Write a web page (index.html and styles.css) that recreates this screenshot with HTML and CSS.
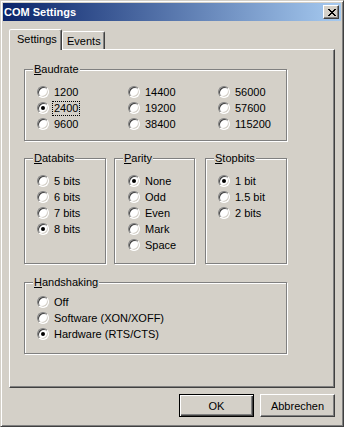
FILE: index.html
```html
<!DOCTYPE html>
<html lang="de">
<head>
  <meta charset="UTF-8">
  <title>COM Settings</title>
  <link rel="stylesheet" href="styles.css">
</head>
<body>
  <div class="window">
    <div class="titlebar">
      <span class="title">COM Settings</span>
      <button class="close">
        <svg width="8" height="7" viewBox="0 0 8 7">
          <path d="M0 0h2v1h-2zM6 0h2v1h-2zM1 1h2v1h-2zM5 1h2v1h-2zM2 2h4v1h-4zM3 3h2v1h-2zM2 4h4v1h-4zM1 5h2v1h-2zM5 5h2v1h-2zM0 6h2v1h-2zM6 6h2v1h-2z" fill="#000"/>
        </svg>
      </button>
    </div>

    <div class="client">
      <div class="tabs">
        <div class="tab active">Settings</div>
        <div class="tab">Events</div>
      </div>

      <div class="panel">
        <div class="group baud">
          <span class="legend"><u>B</u>audrate</span>
          <div class="cols3">
            <label class="radio"><span class="dot"></span>1200</label>
            <label class="radio"><span class="dot"></span>14400</label>
            <label class="radio"><span class="dot"></span>56000</label>
            <label class="radio checked"><span class="dot"></span><span class="focus">2400</span></label>
            <label class="radio"><span class="dot"></span>19200</label>
            <label class="radio"><span class="dot"></span>57600</label>
            <label class="radio"><span class="dot"></span>9600</label>
            <label class="radio"><span class="dot"></span>38400</label>
            <label class="radio"><span class="dot"></span>115200</label>
          </div>
        </div>

        <div class="row">
          <div class="group sub databits">
            <span class="legend"><u>D</u>atabits</span>
            <label class="radio"><span class="dot"></span>5 bits</label>
            <label class="radio"><span class="dot"></span>6 bits</label>
            <label class="radio"><span class="dot"></span>7 bits</label>
            <label class="radio checked"><span class="dot"></span>8 bits</label>
          </div>
          <div class="group sub parity">
            <span class="legend"><u>P</u>arity</span>
            <label class="radio checked"><span class="dot"></span>None</label>
            <label class="radio"><span class="dot"></span>Odd</label>
            <label class="radio"><span class="dot"></span>Even</label>
            <label class="radio"><span class="dot"></span>Mark</label>
            <label class="radio"><span class="dot"></span>Space</label>
          </div>
          <div class="group sub stopbits">
            <span class="legend"><u>S</u>topbits</span>
            <label class="radio checked"><span class="dot"></span>1 bit</label>
            <label class="radio"><span class="dot"></span>1.5 bit</label>
            <label class="radio"><span class="dot"></span>2 bits</label>
          </div>
        </div>

        <div class="group hand">
          <span class="legend"><u>H</u>andshaking</span>
          <label class="radio"><span class="dot"></span>Off</label>
          <label class="radio"><span class="dot"></span>Software (XON/XOFF)</label>
          <label class="radio checked"><span class="dot"></span>Hardware (RTS/CTS)</label>
        </div>
      </div>

      <div class="buttons">
        <button class="btn default">OK</button>
        <button class="btn">Abbrechen</button>
      </div>
    </div>
  </div>
</body>
</html>
```

FILE: styles.css
```css
* {
  margin: 0;
  padding: 0;
  box-sizing: border-box;
}

body {
  font-family: "Liberation Sans", Arial, sans-serif;
  font-size: 11px;
  color: #000;
  background-color: #d4d0c8;
}

.window {
  width: 344px;
  height: 427px;
  background-color: #d4d0c8;
  border: 1px solid;
  border-color: #d4d0c8 #404040 #404040 #d4d0c8;
  box-shadow: inset 1px 1px #fff, inset -1px -1px #808080;
  padding: 2px;
}

/* title bar */
.titlebar {
  height: 18px;
  display: flex;
  align-items: center;
  justify-content: space-between;
  padding: 0 2px 0 1px;
  background: linear-gradient(to right, #0a246a, #a6caf0);
  color: #fff;
  font-weight: bold;
}

.close {
  width: 16px;
  height: 14px;
  display: flex;
  align-items: center;
  justify-content: center;
  padding-left: 1px;
  background-color: #d4d0c8;
  border: 1px solid;
  border-color: #fff #404040 #404040 #fff;
  box-shadow: inset -1px -1px #808080;
}

/* tabs */
.client {
  padding: 8px 6px 0;
}

.tabs {
  display: flex;
  align-items: flex-end;
  height: 20px;
}

.tab {
  height: 18px;
  width: 43px;
  padding: 2px 0 0 4px;
  line-height: 14px;
  border: 1px solid;
  border-bottom: none;
  border-color: #fff #404040 transparent #fff;
  border-radius: 2px 2px 0 0;
  box-shadow: inset -1px 0 #808080;
  background-color: #d4d0c8;
}

.tab.active {
  width: 53px;
  height: 21px;
  padding-left: 7px;
  margin-bottom: -1px;
  position: relative;
  z-index: 1;
}

.panel {
  height: 339px;
  border: 1px solid;
  border-color: #fff #404040 #404040 #fff;
  box-shadow: inset -1px -1px #808080;
  padding: 19px 0 0 14px;
}

/* group boxes */
.group {
  position: relative;
  border: 1px solid #808080;
  box-shadow: inset 1px 1px #fff, 1px 1px #fff;
}

.legend {
  position: absolute;
  top: -8px;
  left: 8px;
  padding: 0 1px;
  line-height: 14px;
  background-color: #d4d0c8;
}

.baud {
  width: 263px;
  height: 72px;
  padding: 14px 0 0 12px;
}

.cols3 {
  display: grid;
  grid-template-columns: 91px 90px 80px;
}

.row {
  display: flex;
  margin-top: 17px;
}

.sub {
  height: 106px;
  padding: 14px 0 0 12px;
}

.databits {
  width: 82px;
}

.parity {
  width: 81px;
  margin-left: 8px;
  padding-left: 13px;
}

.stopbits {
  width: 82px;
  margin-left: 10px;
}

.hand {
  width: 263px;
  height: 72px;
  margin-top: 18px;
  padding: 11px 0 0 12px;
}

/* radio buttons */
.radio {
  display: flex;
  align-items: center;
  gap: 5px;
  height: 16px;
  white-space: nowrap;
}

.dot {
  position: relative;
  flex: none;
  width: 12px;
  height: 12px;
  border-radius: 50%;
  background-color: #fff;
  border: 1px solid;
  border-color: #808080 #fff #fff #808080;
  box-shadow: inset 1px 1px #404040, inset -1px -1px #d4d0c8;
}

.checked .dot::after {
  content: "";
  position: absolute;
  left: 3px;
  top: 3px;
  width: 4px;
  height: 4px;
  border-radius: 50%;
  background-color: #000;
}

.focus {
  display: inline-block;
  line-height: 13px;
  padding: 0 1px;
  margin-left: -1px;
  outline: 1px dotted #000;
}

/* dialog buttons */
.buttons {
  display: flex;
  justify-content: flex-end;
  gap: 6px;
  margin-top: 6px;
}

.btn {
  width: 75px;
  height: 23px;
  font: inherit;
  color: #000;
  background-color: #d4d0c8;
  border: 1px solid;
  border-color: #fff #404040 #404040 #fff;
  box-shadow: inset -1px -1px #808080;
}

.btn.default {
  border-color: #000;
  box-shadow: inset 1px 1px #fff, inset -1px -1px #404040, inset -2px -2px #808080;
}
```
